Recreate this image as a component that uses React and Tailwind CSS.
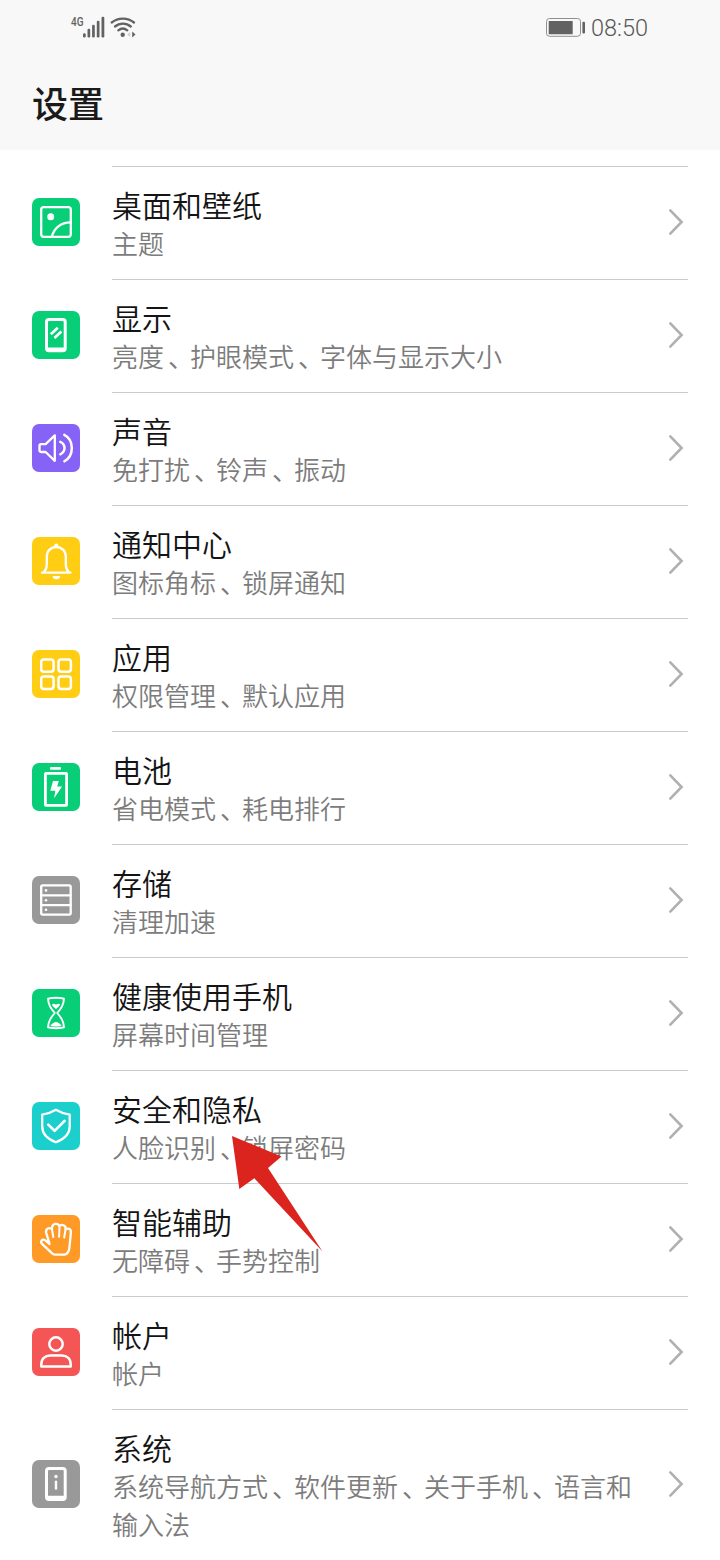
import React from "react";

const icons = {
  wallpaper: (
    <>
      <rect x="9.2" y="9.2" width="29.6" height="29.6" rx="2.5" />
      <circle cx="18.7" cy="18.8" r="3.5" fill="white" stroke="none" />
      <path d="M19.8 38.5C22.5 30 29 24.6 38.5 24.4" />
    </>
  ),
  display: (
    <>
      <path
        d="M17 7h13.700a4 4 0 0 1 4 4v26.300a4 4 0 0 1-4 4H17a4 4 0 0 1-4-4V11a4 4 0 0 1 4-4zM17.200 10a1.200 1.200 0 0 0-1.200 1.200v25.300h15.700V11.200a1.200 1.200 0 0 0-1.200-1.200z"
        fill="white"
        fillRule="evenodd"
        stroke="none"
      />
      <path d="M18.800 23.200l7-6.400M22.400 27l7-6.400" strokeWidth="2.700" strokeLinecap="butt" />
    </>
  ),
  sound: (
    <>
      <path d="M9 20.200h4.600L22.800 11.400v25.400L13.600 28H9a1.500 1.500 0 0 1-1.500-1.500v-4.800A1.500 1.500 0 0 1 9 20.200z" />
      <path d="M28.300 17.900c5.600 2.400 5.600 10 0 12.400M32.300 10.900c10 5 10 21.400 0 26.400" strokeWidth="2.500" />
    </>
  ),
  bell: (
    <>
      <path d="M10 35.700h28.500M11.800 35c2.300-2 3-4.300 3-7.500v-8c0-5.600 4.200-9.500 9.500-9.500s9.500 3.900 9.500 9.500v8c0 3.200.7 5.500 3 7.500" />
      <circle cx="24.300" cy="8.600" r="2" fill="white" stroke="none" />
      <path d="M20.700 38.900h7.400a3.700 3.300 0 0 1-7.400 0z" fill="white" stroke="none" />
    </>
  ),
  apps: (
    <>
      <rect x="9.200" y="9.400" width="12.400" height="12.400" rx="2.700" strokeWidth="2.500" />
      <rect x="26.500" y="9.400" width="12.400" height="12.400" rx="2.700" strokeWidth="2.500" />
      <rect x="9.200" y="26.500" width="12.400" height="12.400" rx="2.700" strokeWidth="2.500" />
      <rect x="26.500" y="26.500" width="12.400" height="12.400" rx="2.700" strokeWidth="2.500" />
    </>
  ),
  battery: (
    <>
      <rect x="18" y="4" width="11" height="2.800" rx="1" fill="white" stroke="none" />
      <rect x="13.400" y="10.400" width="21.200" height="32" rx="0.600" strokeWidth="2.800" />
      <path d="M21 18h5.800l-1.600 5.400h4.900l-8 11.800 1.200-7.400h-5z" fill="white" stroke="none" />
    </>
  ),
  storage: (
    <>
      <rect x="9.200" y="9.400" width="29.500" height="29.200" rx="1.500" />
      <path d="M9 19.300h29.500M9 29.200h29.500" />
      <circle cx="14" cy="14.400" r="1.300" fill="white" stroke="none" />
      <circle cx="14" cy="24.300" r="1.300" fill="white" stroke="none" />
      <circle cx="14" cy="33.800" r="1.300" fill="white" stroke="none" />
    </>
  ),
  hourglass: (
    <>
      <path
        d="M16 9.600c5.300-1.100 10.700-1.100 16 0C31.500 16 29.500 19 25.200 24c4.300 5 6.300 8 6.800 14.400-5.300 1.100-10.700 1.100-16 0C16.500 32 18.500 29 22.800 24 18.500 19 16.500 16 16 9.600z"
        strokeWidth="1.900"
      />
      <path d="M19.900 15.800c1.500-1.500 2.800-1 4.100 0 1.300-1.200 2.700-1.300 4.200-.5-.9 2-2.500 3.500-4.200 4.800-1.700-1.300-3.200-2.600-4.100-4.300zM18.500 37c.7-2.200 3-3.300 5.500-4 2.500.7 4.800 1.800 5.500 4-3.600.7-7.400.7-11 0z" fill="white" stroke="none" />
    </>
  ),
  shield: (
    <>
      <path d="M23.900 7.800c4.300 2.600 8.600 4.200 13.800 4.900v11.800c0 7.700-6 12.800-13.800 15.800-7.800-3-13.700-8.100-13.700-15.800V12.700c5.200-.7 9.400-2.300 13.700-4.900z" />
      <path d="M16.200 22.600l6.400 6.200 10-9.900" strokeWidth="2.600" />
    </>
  ),
  hand: (
    <>
      <path d="M17.600 29L14.200 17.800C13.200 14 17.500 11.500 20 14.500 19.300 8.200 26.500 7 27.500 11.600 29 8.600 34.200 10 33.600 14.500 35.600 12.600 39.300 13.800 38.900 17.300L37.400 33C37.200 35.300 36.600 36.500 35.600 37.800 34.500 39.300 33.800 39.700 32.300 39.700H23.500C21.600 39.700 20.600 39.100 19.400 37.700L10 28.800C7.800 26.400 10.300 23.400 13 25.200z" />
      <path d="M20 14.500l1.300 7.500M27.500 11.800l-.4 10M33.500 14.500l-1.300 8" strokeWidth="2" />
    </>
  ),
  account: (
    <>
      <circle cx="24" cy="16" r="6.700" strokeWidth="2.500" />
      <path d="M9.300 38.600v-2.200c0-5.500 3.500-8.900 9-8.900h11.400c5.500 0 9 3.400 9 8.900v2.200z" strokeWidth="2.500" />
    </>
  ),
  system: (
    <>
      <path
        d="M17 7h13.700a4 4 0 0 1 4 4v26a4 4 0 0 1-4 4H17a4 4 0 0 1-4-4V11a4 4 0 0 1 4-4zM17.200 10a1.200 1.200 0 0 0-1.200 1.200v24.600h15.700V11.200a1.200 1.200 0 0 0-1.200-1.200z"
        fill="white"
        fillRule="evenodd"
        stroke="none"
      />
      <circle cx="24" cy="16.500" r="1.700" fill="white" stroke="none" />
      <path d="M24 20.700v8.800" strokeLinecap="butt" strokeWidth="2.400" />
    </>
  ),
};

const settings = [
  { title: "桌面和壁纸", desc: "主题", icon: "wallpaper", color: "bg-[#07ce77]" },
  { title: "显示", desc: "亮度、护眼模式、字体与显示大小", icon: "display", color: "bg-[#07ce77]" },
  { title: "声音", desc: "免打扰、铃声、振动", icon: "sound", color: "bg-[#8662f6]" },
  { title: "通知中心", desc: "图标角标、锁屏通知", icon: "bell", color: "bg-[#ffcd14]" },
  { title: "应用", desc: "权限管理、默认应用", icon: "apps", color: "bg-[#ffcd14]" },
  { title: "电池", desc: "省电模式、耗电排行", icon: "battery", color: "bg-[#07ce77]" },
  { title: "存储", desc: "清理加速", icon: "storage", color: "bg-[#999999]" },
  { title: "健康使用手机", desc: "屏幕时间管理", icon: "hourglass", color: "bg-[#07ce77]" },
  { title: "安全和隐私", desc: "人脸识别、锁屏密码", icon: "shield", color: "bg-[#1bcfcd]" },
  { title: "智能辅助", desc: "无障碍、手势控制", icon: "hand", color: "bg-[#ff9a26]" },
  { title: "帐户", desc: "帐户", icon: "account", color: "bg-[#f45656]" },
  { title: "系统", desc: "系统导航方式、软件更新、关于手机、语言和输入法", icon: "system", color: "bg-[#999999]" },
];

function StatusBar() {
  return (
    <div className="flex h-14 items-center justify-between pr-[72px] pl-[70px]">
      <svg width="68" height="56" viewBox="70 0 68 56" fill="#626262">
        <text x="71" y="26.400" fontFamily="Roboto" fontSize="13.500" fontWeight="500" textLength="12.500" lengthAdjust="spacingAndGlyphs">
          4G
        </text>
        <rect x="83" y="33.200" width="2.700" height="4.200" rx="1.200" />
        <rect x="87.500" y="28.800" width="2.700" height="8.600" rx="1.200" />
        <rect x="92.100" y="24.800" width="2.700" height="12.600" rx="1.200" />
        <rect x="96.800" y="20.700" width="2.700" height="16.700" rx="1.200" />
        <rect x="101.500" y="16.700" width="2.800" height="20.700" rx="1.200" />
        <g fill="none" stroke="#626262" strokeWidth="2.300" strokeLinecap="round">
          <path d="M111.700 22.500c6.300-5.300 16-5.300 22.300 0M115 26.500c4.600-3.900 11.200-3.900 15.800 0M118.300 30.300c2.700-2.200 6.300-2.200 9 0" />
        </g>
        <circle cx="122.700" cy="34.700" r="2.200" />
        <path d="M130.200 32v5l-3-2.500z" fill="#cfcfcf" />
        <path d="M132.200 31.500v6l3.300-3z" />
      </svg>
      <div className="flex items-center">
        <svg width="45" height="56" viewBox="546 0 45 56" fill="#626262">
          <rect x="546.500" y="18.500" width="34" height="17.800" rx="3" fill="none" stroke="#8f8f8f" />
          <rect x="548.700" y="21" width="24" height="13.300" rx="0.500" />
          <rect x="582.400" y="21.800" width="2.600" height="11.600" rx="1" />
        </svg>
        <span className="mt-0.5 font-[Roboto,sans-serif] text-[23.5px] leading-none font-[350] text-[#585858]">08:50</span>
      </div>
    </div>
  );
}

// The enumeration comma sits in the middle of its cell
function Description({ text }) {
  return text.split(/(、)/).map((part, index) =>
    part === "、" ? (
      <span key={index} className="pl-1 tracking-[-4px]">
        {part}
      </span>
    ) : (
      part
    )
  );
}

function SettingRow({ item }) {
  return (
    <div className="flex items-center pl-8">
      <div className={`mb-0.5 flex size-12 shrink-0 rounded-[7px] ${item.color}`}>
        <svg
          width="48"
          height="48"
          viewBox="0 0 48 48"
          fill="none"
          stroke="white"
          strokeWidth="2.300"
          strokeLinecap="round"
          strokeLinejoin="round"
        >
          {icons[item.icon]}
        </svg>
      </div>
      <div className="mr-8 ml-8 flex min-w-0 flex-1 items-center border-t border-[#cacaca] pt-[19px] pb-[17px]">
        <div className="w-[530px]">
          <h2 className="mb-0.5 text-[30px] leading-9 font-[350] text-[#141414]">{item.title}</h2>
          <p className="text-[26px] leading-[38px] font-[350] text-[#7c7c7c]">
            <Description text={item.desc} />
          </p>
        </div>
        <svg className="mr-1 mb-1 ml-auto shrink-0" width="16" height="28" viewBox="0 0 16 28" fill="none" stroke="#b0b0b0" strokeWidth="2.600">
          <path d="M2.300 2.400L13.600 14 2.300 25.600" strokeLinecap="round" />
        </svg>
      </div>
    </div>
  );
}

export default function App() {
  return (
    <div className="relative h-[1560px] w-[720px] overflow-hidden bg-white font-['Noto_Sans_CJK_SC',sans-serif]">
      <header className="h-[150px] bg-[#f8f8f8]">
        <StatusBar />
        <h1 className="pl-8 text-[36px] leading-[92px] font-medium text-[#1a1a1a]">设置</h1>
      </header>

      <main className="pt-4">
        {settings.map((item) => (
          <SettingRow key={item.icon} item={item} />
        ))}
      </main>

      {/* Pointer to the security entry */}
      <svg className="absolute top-[1136px] left-[232px]" width="92" height="116" viewBox="0 0 92 116">
        <path d="M0 0l49.500 20.500L36 32l54.500 83.500L22.300 42.300 7.300 53z" fill="#db241d" />
      </svg>
    </div>
  );
}
